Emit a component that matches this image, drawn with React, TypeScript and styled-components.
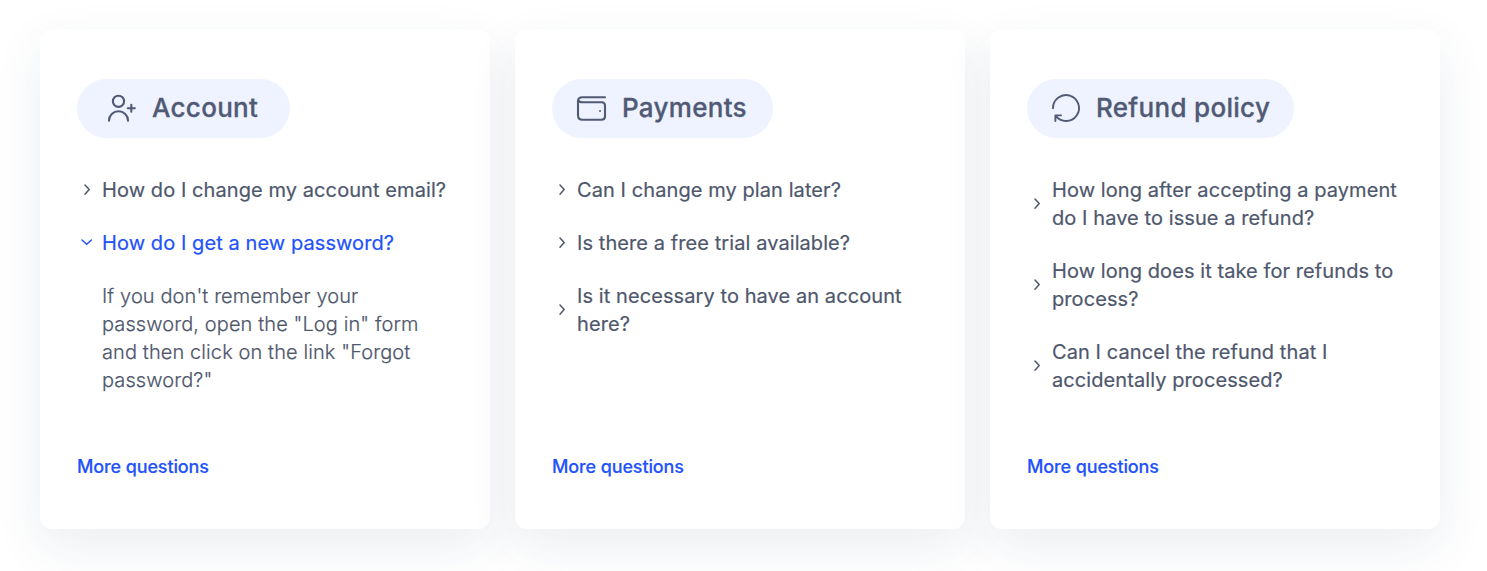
import React from 'react';
import styled, { createGlobalStyle } from 'styled-components';

const Global = createGlobalStyle`
  *{box-sizing:border-box}
  body{margin:0;background:#fff;font-family:Inter,sans-serif;color:#4e576c;overflow:hidden}
`;
const Grid = styled.main`
  display:grid;grid-template-columns:repeat(3,450px);gap:25px;padding:29px 0 42px 40px;
`;
const Card = styled.section`
  display:flex;flex-direction:column;align-items:flex-start;height:500px;padding:50px 37px;
  background:#fff;border-radius:12px;box-shadow:0 18px 50px rgba(28,62,105,.09);
`;
const Badge = styled.h2<{ $w: number; $pad: number }>`
  display:flex;align-items:center;gap:14px;width:${p => p.$w}px;height:59px;margin:0 0 38px;
  padding:0 0 1px ${p => p.$pad}px;border-radius:30px;background:#eef3ff;color:#515a74;
  font-size:26px;font-weight:500;letter-spacing:.3px;white-space:nowrap;-webkit-text-stroke:.3px currentColor;
  svg{flex:none}
`;
const BadgeText = styled.span`padding-bottom:2px;`;
const List = styled.div`display:flex;flex-direction:column;gap:25px;`;
const Question = styled.button<{ $open?: boolean }>`
  display:flex;align-items:center;gap:9px;padding:0;border:0;background:none;text-align:left;
  font:400 20px/28px Inter,sans-serif;letter-spacing:.08px;-webkit-text-stroke:.2px currentColor;
  color:${p => (p.$open ? '#2152fb' : '#4e576c')};white-space:pre-line;
  svg{flex:none;margin-left:2px}
`;
const Answer = styled.p`
  margin:0 0 0 25px;font-size:20px;line-height:28px;font-weight:300;letter-spacing:.1px;
  -webkit-text-stroke:.2px currentColor;white-space:pre-line;
`;
const More = styled.a`
  margin-top:auto;font-size:18px;line-height:24px;font-weight:500;letter-spacing:-.12px;
  -webkit-text-stroke:.15px currentColor;color:#2152fb;
`;

const Chevron = ({ open }: { open?: boolean }) => (
  <svg width="14" height="14" viewBox="0 0 14 14" fill="none" stroke="currentColor" strokeWidth="1.5" strokeLinecap="round" strokeLinejoin="round">
    <path d={open ? 'M3 4l4.7 4.3L12.4 4' : 'M6 2l4.2 4.6L6 11.2'} />
  </svg>
);
const stroke = { fill: 'none', stroke: 'currentColor', strokeWidth: 2, strokeLinecap: 'round', strokeLinejoin: 'round' } as const;
const UserIcon = () => (
  <svg width="32" height="32" viewBox="0 0 32 32" {...stroke} strokeWidth={2.1}>
    <circle cx="12.5" cy="9.3" r="5.6" />
    <path d="M3 28.8v-.3a9.5 9.2 0 0 1 19 0v.3M25.3 12.8v7M21.8 16.3h7" />
  </svg>
);
const WalletIcon = () => (
  <svg width="32" height="32" viewBox="0 0 32 32" {...stroke} strokeWidth={2.1}>
    <path d="M29 5.3H6.5C3.8 5.3 2 6.8 2 9.1v14.1c0 3 1.5 4.5 4.5 4.5h19c2.3 0 3.5-1.2 3.5-3.5V13.7c0-2.3-1.2-3.5-3.5-3.5h-19C4.5 10.2 3 9.7 2.4 8.5" />
    <circle cx="24" cy="19.1" r="1" fill="currentColor" stroke="none" />
  </svg>
);
const RefundIcon = () => (
  <svg width="32" height="32" viewBox="0 0 32 32" {...stroke} strokeWidth={1.9}>
    <path d="M3 16.3A13 13 0 1 1 5.6 23.8M5.4 29V23.4H11" />
  </svg>
);

type Item = { q: string; a?: string };
const groups: { title: string; w: number; pad: number; icon: React.ReactNode; items: Item[] }[] = [
  { title: 'Account', w: 213, pad: 29, icon: <UserIcon />, items: [
    { q: 'How do I change my account email?' },
    { q: 'How do I get a new password?', a: 'If you don\'t remember your\npassword, open the "Log in" form\nand then click on the link "Forgot\npassword?"' },
  ] },
  { title: 'Payments', w: 221, pad: 24, icon: <WalletIcon />, items: [
    { q: 'Can I change my plan later?' }, { q: 'Is there a free trial available?' },
    { q: 'Is it necessary to have an account\nhere?' },
  ] },
  { title: 'Refund policy', w: 267, pad: 23, icon: <RefundIcon />, items: [
    { q: 'How long after accepting a payment\ndo I have to issue a refund?' },
    { q: 'How long does it take for refunds to\nprocess?' },
    { q: 'Can I cancel the refund that I\naccidentally processed?' },
  ] },
];

export default function App() {
  return (
    <>
      <Global />
      <Grid>
        {groups.map(g => (
          <Card key={g.title}>
            <Badge $w={g.w} $pad={g.pad}>{g.icon}<BadgeText>{g.title}</BadgeText></Badge>
            <List>
              {g.items.map(i => (
                <React.Fragment key={i.q}>
                  <Question $open={!!i.a}><Chevron open={!!i.a} />{i.q}</Question>
                  {i.a && <Answer>{i.a}</Answer>}
                </React.Fragment>
              ))}
            </List>
            <More>More questions</More>
          </Card>
        ))}
      </Grid>
    </>
  );
}
